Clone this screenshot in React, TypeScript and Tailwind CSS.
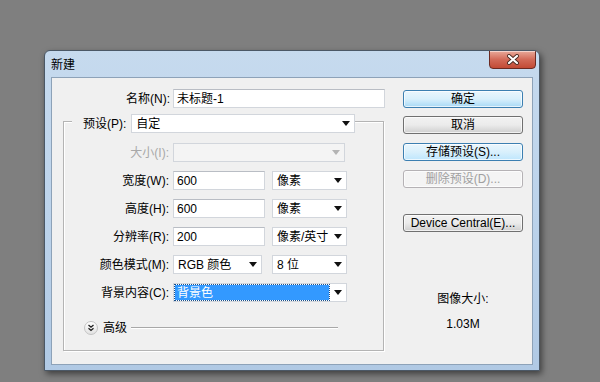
import type { ReactNode } from "react";

const font = { fontFamily: '"Liberation Sans", "Noto Sans CJK SC", sans-serif' };

function Arrow({ disabled }: { disabled?: boolean }) {
  return (
    <svg width="8" height="5" viewBox="0 0 8 5" className="shrink-0">
      <path d="M0 0 H8 L4 5 Z" fill={disabled ? "#b4b4b4" : "#111"} />
    </svg>
  );
}

function TextBox({ value, width }: { value: string; width: string }) {
  return (
    <div className={`flex h-[19px] ${width} items-center whitespace-nowrap border border-[#d2d6dc] border-t-[#b9bdc4] bg-white pl-[3px] text-[12px] text-black`}>
      {value}
    </div>
  );
}

function Select({ value, width, disabled, selected }: { value: string; width: string; disabled?: boolean; selected?: boolean }) {
  return (
    <div className={`flex h-[19px] ${width} items-center whitespace-nowrap border border-[#d2d6dc] ${disabled ? "bg-[#f4f4f4]" : "bg-white"} text-[12px] text-black`}>
      <div className="flex h-full min-w-0 flex-1 items-center p-[1px]">
        {selected ? (
          <span className="flex h-full w-full items-center bg-[#3399ff] pl-[2px] text-white outline outline-1 outline-dotted outline-[#1a4f8a]">{value}</span>
        ) : (
          <span className="pl-[3px]">{value}</span>
        )}
      </div>
      <div className="flex w-[16px] shrink-0 items-center justify-center">
        <Arrow disabled={disabled} />
      </div>
    </div>
  );
}

function Row({ label, children, disabled, className = "" }: { label: string; children: ReactNode; disabled?: boolean; className?: string }) {
  return (
    <div className={`flex h-[19px] items-center ${className}`}>
      <span className={`w-[106px] shrink-0 pr-[1px] text-right text-[12px] ${disabled ? "text-[#a8a8a8]" : "text-black"}`}>{label}</span>
      <div className="ml-[3px] flex items-center">{children}</div>
    </div>
  );
}

function Btn({ children, kind = "normal", className = "" }: { children: ReactNode; kind?: "normal" | "default" | "hover" | "disabled"; className?: string }) {
  const skin =
    kind === "default"
      ? "border-[#3c7fb1] bg-gradient-to-b from-[#eaf6fd] via-[#d9f0fc] to-[#a7d9f5] text-black"
      : kind === "hover"
        ? "border-[#3c7fb1] bg-gradient-to-b from-[#eaf6fd] via-[#d9f0fc] to-[#bee6fd] text-black"
        : kind === "disabled"
          ? "border-[#b5b2b5] bg-[#f4f4f4] text-[#a0a0a0]"
          : "border-[#707070] bg-gradient-to-b from-[#f2f2f2] via-[#ebebeb] to-[#cfcfcf] text-black";
  return (
    <div className={`flex h-[18px] w-[120px] items-center justify-center whitespace-nowrap rounded-[3px] border text-[12px] shadow-[inset_0_0_0_1px_rgba(255,255,255,0.7)] ${skin} ${className}`}>
      {children}
    </div>
  );
}

export default function App() {
  return (
    <div className="flex h-[382px] w-[600px] items-start overflow-hidden bg-[#7f7f7f] pl-[44px] pt-[50px]" style={font}>
      <div className="relative flex h-[321px] w-[496px] shrink-0 flex-col overflow-hidden rounded-t-[6px] border border-[#4b5866] bg-gradient-to-b from-[#c6daee] via-[#bcd3eb] to-[#b0c9e4] px-[6px] pb-[5px] shadow-[2px_3px_6px_rgba(0,0,0,0.5)]">
        <div className="flex h-[26px] items-center pt-[1px] text-[12px] text-black">新建</div>
        <div className="absolute right-[3px] top-[-1px] flex h-[19px] w-[47px] items-center justify-center rounded-b-[4px] border border-[#6b2a22] bg-gradient-to-b from-[#e8a99a] via-[#d26a58] to-[#c24a35] shadow-[inset_0_1px_0_rgba(255,255,255,0.5)]">
          <svg width="14" height="11" viewBox="0 0 14 11">
            <path d="M3 2 L11 9 M11 2 L3 9" stroke="#4a2a22" strokeWidth="4" strokeLinecap="round" />
            <path d="M3 2 L11 9 M11 2 L3 9" stroke="#fff" strokeWidth="2.2" strokeLinecap="round" />
          </svg>
        </div>

        <div className="flex min-w-0 flex-1 border border-[#8da2b8] bg-[#f0f0f0]">
          <div className="w-[351px] shrink-0 pt-[11px]">
            <div className="flex h-[19px] items-center">
              <span className="w-[118px] shrink-0 text-right text-[12px] text-black">名称(N):</span>
              <div className="ml-[3px]">
                <TextBox value="未标题-1" width="w-[212px]" />
              </div>
            </div>

            <div className="ml-[11px] mt-[13px] h-[230px] w-[321px] border border-[#b4b4b4] shadow-[inset_1px_1px_0_#fff,1px_1px_0_#fff]">
              <div className="-mt-[8px] flex h-[19px] items-center">
                <span className="ml-[8px] bg-[#f0f0f0] pl-[11px] pr-[5px] text-[12px] text-black">预设(P):</span>
                <Select value="自定" width="w-[224px]" />
              </div>
              <Row label="大小(I):" disabled className="mt-[10px]">
                <Select value="" width="w-[172px]" disabled />
              </Row>
              <Row label="宽度(W):" className="mt-[9px]">
                <TextBox value="600" width="w-[92px]" />
                <div className="ml-[7px]">
                  <Select value="像素" width="w-[75px]" />
                </div>
              </Row>
              <Row label="高度(H):" className="mt-[9px]">
                <TextBox value="600" width="w-[92px]" />
                <div className="ml-[7px]">
                  <Select value="像素" width="w-[75px]" />
                </div>
              </Row>
              <Row label="分辨率(R):" className="mt-[9px]">
                <TextBox value="200" width="w-[92px]" />
                <div className="ml-[7px]">
                  <Select value="像素/英寸" width="w-[75px]" />
                </div>
              </Row>
              <Row label="颜色模式(M):" className="mt-[9px]">
                <Select value="RGB 颜色" width="w-[89px]" />
                <div className="ml-[10px]">
                  <Select value="8 位" width="w-[75px]" />
                </div>
              </Row>
              <Row label="背景内容(C):" className="mt-[9px]">
                <Select value="背景色" width="w-[174px]" selected />
              </Row>

              <div className="mt-[19px] flex h-[14px] items-center pl-[20px]">
                <div className="flex h-[14px] w-[14px] items-center justify-center rounded-full border border-[#c4c4c4] bg-gradient-to-b from-[#ffffff] to-[#e2e2e2]">
                  <svg width="8" height="8" viewBox="0 0 8 8">
                    <path d="M1.5 1 L4 3.2 L6.5 1 M1.5 4.3 L4 6.5 L6.5 4.3" stroke="#222" strokeWidth="1.3" fill="none" />
                  </svg>
                </div>
                <span className="ml-[5px] text-[12px] text-black">高级</span>
                <div className="ml-[4px] h-[2px] w-[207px] border-b border-t border-[#a8a8a8] border-b-white" />
              </div>
            </div>
          </div>

          <div className="flex w-[120px] shrink-0 flex-col items-center pt-[12px]">
            <Btn kind="default">确定</Btn>
            <Btn className="mt-[8px]">取消</Btn>
            <Btn kind="hover" className="mt-[9px]">存储预设(S)...</Btn>
            <Btn kind="disabled" className="mt-[9px]">删除预设(D)...</Btn>
            <Btn className="mt-[26px]">Device Central(E)...</Btn>
            <div className="mt-[58px] text-[12px] text-black">图像大小:</div>
            <div className="mt-[7px] text-[12px] text-black">1.03M</div>
          </div>
        </div>
      </div>
    </div>
  );
}
